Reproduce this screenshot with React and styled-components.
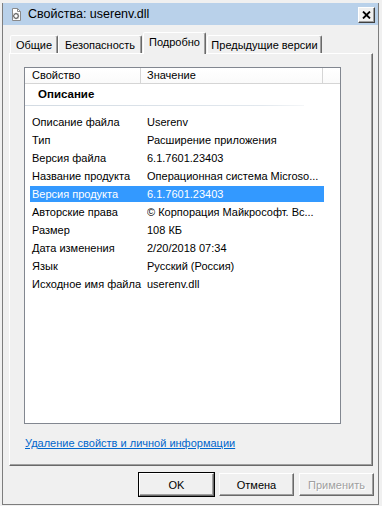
import React from 'react';
import styled, { createGlobalStyle } from 'styled-components';

const GlobalStyle = createGlobalStyle`
  html, body {
    margin: 0;
    padding: 0;
    background: #f0f0f0;
  }
  body {
    font-family: "Liberation Sans", Arial, sans-serif;
    font-size: 11px;
    color: #000;
  }
`;

const Window = styled.div`
  box-sizing: border-box;
  width: 377px;
  height: 502px;
  margin: 3px 3px 1px 2px;
  border: 1px solid #7d7d7d;
  border-top: none;
  background: #f0f0f0;
  display: flex;
  flex-direction: column;
`;

const TitleBar = styled.div`
  height: 22px;
  background: #b9d1ea;
  display: flex;
  align-items: center;
  padding-left: 7px;
  flex-shrink: 0;
`;

const TitleText = styled.span`
  margin-left: 5px;
  font-size: 12.5px;
  color: #000;
`;

const CloseButton = styled.div`
  box-sizing: border-box;
  width: 17px;
  height: 16px;
  margin-left: auto;
  margin-right: 3px;
  align-self: flex-start;
  margin-top: 4px;
  background: #f0f0f0;
  border: 1px solid;
  border-color: #fff #404040 #404040 #fff;
  box-shadow: inset -1px -1px 0 #a0a0a0;
  display: flex;
  align-items: center;
  justify-content: center;
`;

const TabStrip = styled.div`
  display: flex;
  align-items: flex-end;
  height: 21px;
  margin-top: 7px;
  padding-left: 7px;
`;

const Tab = styled.div`
  box-sizing: border-box;
  position: relative;
  width: ${p => p.$w}px;
  height: ${p => (p.$active ? 22 : 18)}px;
  margin: ${p => (p.$active ? '0 1px -1px 1px' : '0')};
  z-index: ${p => (p.$active ? 2 : 1)};
  background: #f0f0f0;
  border: 1px solid;
  border-bottom: none;
  border-color: #fff #696969 transparent #fff;
  box-shadow: inset -1px 0 0 #a0a0a0;
  border-radius: 2px 2px 0 0;
  display: flex;
  align-items: center;
  justify-content: center;
  padding-bottom: ${p => (p.$active ? 3 : 0)}px;
  white-space: nowrap;
`;

const Panel = styled.div`
  box-sizing: border-box;
  width: 364px;
  height: 413px;
  margin-left: 6px;
  border: 1px solid;
  border-color: #fff #696969 #696969 #fff;
  box-shadow: inset -1px -1px 0 #a0a0a0;
  padding: 13px 0 0 14px;
  display: flex;
  flex-direction: column;
`;

const ListView = styled.div`
  box-sizing: border-box;
  width: 317px;
  height: 357px;
  border: 1px solid #828790;
  background: #fff;
  display: flex;
  flex-direction: column;
  overflow: hidden;
`;

const Header = styled.div`
  display: flex;
  height: 15px;
  border-bottom: 1px solid #d5d5d5;
  background: linear-gradient(#fff, #fafafa);
`;

const HeaderCell = styled.div`
  box-sizing: border-box;
  width: ${p => (p.$w ? `${p.$w}px` : 'auto')};
  flex: ${p => (p.$w ? 'none' : '1')};
  padding-left: ${p => p.$pad || 0}px;
  border-right: ${p => (p.$last ? 'none' : '1px solid #d5d5d5')};
  line-height: 15px;
  white-space: nowrap;
  overflow: hidden;
`;

const GroupTitle = styled.div`
  height: 21px;
  line-height: 21px;
  padding-left: 13px;
  font-weight: bold;
  font-size: 11.5px;
`;

const GroupLine = styled.div`
  width: 279px;
  height: 1px;
  background: linear-gradient(to right, #d3dbe3, #e2e8ee 85%, #f4f6f8);
  margin-bottom: 7px;
`;

const Row = styled.div`
  display: flex;
  width: 294px;
  height: 16px;
  margin: 1px 0 1px 5px;
  align-items: center;
  background: ${p => (p.$selected ? '#3399ff' : 'transparent')};
  color: ${p => (p.$selected ? '#fff' : '#000')};
  white-space: nowrap;
`;

const Cell = styled.div`
  box-sizing: border-box;
  width: ${p => (p.$w ? `${p.$w}px` : 'auto')};
  flex: ${p => (p.$w ? 'none' : '1')};
  min-width: 0;
  padding-left: ${p => p.$pad || 0}px;
  overflow: hidden;
  text-overflow: ellipsis;
`;

const Link = styled.a`
  margin: 12px 0 0 1px;
  line-height: 14px;
  color: #0066cc;
  text-decoration: underline;
  cursor: pointer;
  align-self: flex-start;
`;

const ButtonRow = styled.div`
  display: flex;
  justify-content: flex-end;
  gap: 5px;
  margin-top: 7px;
  padding-right: 4px;
`;

const Button = styled.div`
  box-sizing: border-box;
  width: 75px;
  height: 23px;
  background: #f0f0f0;
  border: 1px solid;
  border-color: #fff #696969 #696969 #fff;
  box-shadow: ${p =>
    p.$default
      ? '0 0 0 1px #000, inset -1px -1px 0 #a0a0a0'
      : 'inset -1px -1px 0 #a0a0a0'};
  display: flex;
  align-items: center;
  justify-content: center;
  color: ${p => (p.$disabled ? '#a0a0a0' : '#000')};
  text-shadow: ${p => (p.$disabled ? '1px 1px 0 #fff' : 'none')};
`;

const FileIcon = () => (
  <svg width="13" height="13" viewBox="0 0 13 13">
    <path d="M2.5 0.5h5l3 3v9h-8z" fill="#fff" stroke="#8a8a8a" />
    <path d="M7.5 0.5v3h3" fill="none" stroke="#8a8a8a" />
    <circle cx="6" cy="8" r="2.3" fill="none" stroke="#6b6b6b" strokeWidth="1.2" />
    <path d="M6 4.8v1.2M6 10v1.2M2.8 8h1.2M8 8h1.2M3.8 5.8l0.8 0.8M7.4 9.4l0.8 0.8M3.8 10.2l0.8-0.8M7.4 6.6l0.8-0.8" stroke="#6b6b6b" strokeWidth="1" />
  </svg>
);

const CloseIcon = () => (
  <svg width="9" height="8" viewBox="0 0 9 8">
    <path d="M1 0.5l7 7M8 0.5l-7 7" stroke="#000" strokeWidth="1.8" />
  </svg>
);

const tabs = [
  { label: 'Общие', w: 48 },
  { label: 'Безопасность', w: 84 },
  { label: 'Подробно', w: 63, active: true },
  { label: 'Предыдущие версии', w: 115 },
];

const rows = [
  ['Описание файла', 'Userenv'],
  ['Тип', 'Расширение приложения'],
  ['Версия файла', '6.1.7601.23403'],
  ['Название продукта', 'Операционная система Microso...'],
  ['Версия продукта', '6.1.7601.23403', true],
  ['Авторские права', '© Корпорация Майкрософт. Вс...'],
  ['Размер', '108 КБ'],
  ['Дата изменения', '2/20/2018 07:34'],
  ['Язык', 'Русский (Россия)'],
  ['Исходное имя файла', 'userenv.dll'],
];

const App = () => {
  return (
    <>
      <GlobalStyle />
      <Window>
        <TitleBar>
          <FileIcon />
          <TitleText>Свойства: userenv.dll</TitleText>
          <CloseButton>
            <CloseIcon />
          </CloseButton>
        </TitleBar>

        <TabStrip>
          {tabs.map(t => (
            <Tab key={t.label} $w={t.w} $active={t.active}>
              {t.label}
            </Tab>
          ))}
        </TabStrip>

        <Panel>
          <ListView>
            <Header>
              <HeaderCell $w={116} $pad={7}>Свойство</HeaderCell>
              <HeaderCell $w={182} $pad={6}>Значение</HeaderCell>
              <HeaderCell $last />
            </Header>
            <GroupTitle>Описание</GroupTitle>
            <GroupLine />
            {rows.map(([name, value, selected]) => (
              <Row key={name} $selected={selected}>
                <Cell $w={117} $pad={2}>{name}</Cell>
                <Cell>{value}</Cell>
              </Row>
            ))}
          </ListView>
          <Link>Удаление свойств и личной информации</Link>
        </Panel>

        <ButtonRow>
          <Button $default>OK</Button>
          <Button>Отмена</Button>
          <Button $disabled>Применить</Button>
        </ButtonRow>
      </Window>
    </>
  );
};

export default App;
